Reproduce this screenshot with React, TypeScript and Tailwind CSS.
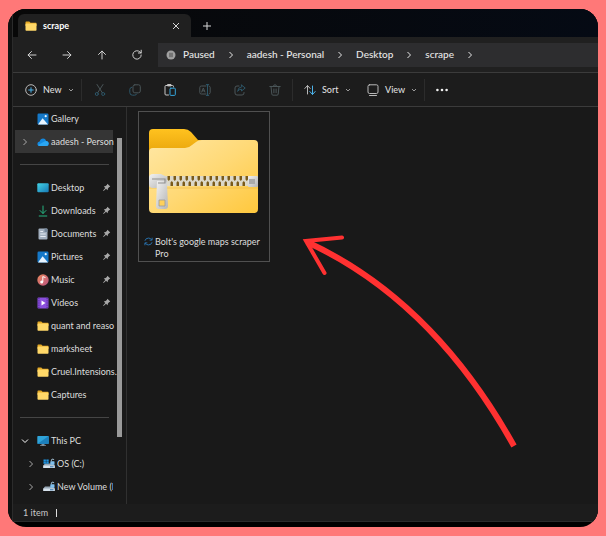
import type { ReactNode } from "react"

function Chevron({ className }: { className?: string }) {
  return (
    <svg
      viewBox="0 0 8 8"
      className={`w-2 h-2 shrink-0 ${className ?? ""}`}
      fill="none"
      stroke="currentColor"
    >
      <path d="M2.5 1L5.5 4L2.5 7" />
    </svg>
  )
}

function Stroke({
  children,
  className,
}: {
  children: ReactNode
  className?: string
}) {
  return (
    <svg
      viewBox="0 0 12 12"
      className={`w-3 h-3 shrink-0 ${className ?? ""}`}
      fill="none"
      stroke="currentColor"
      strokeLinecap="round"
      strokeLinejoin="round"
    >
      {children}
    </svg>
  )
}

function FolderIcon() {
  return (
    <svg viewBox="0 0 12 12" className="w-3 h-3 shrink-0">
      <path d="M.5 2.2Q.5 1.5 1.2 1.5H4.3L5.5 2.7H11Q11.5 2.7 11.5 3.3V6H.5Z" fill="#e5a924" />
      <rect x=".5" y="3.4" width="11" height="7.4" rx=".7" fill="#ffd868" />
    </svg>
  )
}

function PictureIcon() {
  return (
    <svg viewBox="0 0 12 12" className="w-3 h-3 shrink-0">
      <rect x=".5" y=".5" width="11" height="11" rx="1.2" fill="#1578c8" />
      <path d="M1 11.5L5.6 5.2L11 11.5Z" fill="#e9f5ff" />
      <circle cx="8.7" cy="3.2" r="1.1" fill="#e9f5ff" />
    </svg>
  )
}

function CloudIcon() {
  return (
    <svg viewBox="0 0 12 12" className="w-3 h-3 shrink-0">
      <path d="M3 10Q.4 10 .4 7.7Q.4 5.6 2.6 5.4Q3.5 2.5 6.1 2.5Q8.4 2.5 9.2 4.9Q11.7 5.1 11.7 7.5Q11.7 10 9.3 10Z" fill="#1389e0" />
      <path d="M3 10Q1.8 10 1 9L7.4 5.6Q8.3 4.8 9.2 4.9Q11.7 5.1 11.7 7.5Q11.7 10 9.3 10Z" fill="#2ba6f2" />
    </svg>
  )
}

function DesktopIcon() {
  return (
    <svg viewBox="0 0 12 12" className="w-3 h-3 shrink-0">
      <defs>
        <linearGradient id="desktop" x1="0" y1="0" x2="1" y2="1">
          <stop offset="0" stopColor="#43d3e6" />
          <stop offset="1" stopColor="#1779b5" />
        </linearGradient>
      </defs>
      <rect x=".3" y="1.3" width="11.4" height="9" rx="1" fill="url(#desktop)" />
    </svg>
  )
}

function DownloadIcon() {
  return (
    <Stroke className="text-[#27b582]">
      <path d="M6 1V8.3M3 5.5L6 8.5L9 5.5M2.2 11H9.8" />
    </Stroke>
  )
}

function DocumentIcon() {
  return (
    <svg viewBox="0 0 12 12" className="w-3 h-3 shrink-0">
      <rect x="1.5" y=".5" width="9" height="11" rx="1" fill="#a3b0bf" />
      <path d="M3.3 3.5H6M3.3 6H8.7M3.3 8.5H8.7" stroke="#e6ecf3" strokeWidth="1.1" />
      <path d="M7.5 .5H9.5Q10.5 .5 10.5 1.5V4H7.5Z" fill="#74869a" />
    </svg>
  )
}

function MusicIcon() {
  return (
    <svg viewBox="0 0 12 12" className="w-3 h-3 shrink-0">
      <defs>
        <linearGradient id="music" x1="0" y1="0" x2="1" y2="1">
          <stop offset="0" stopColor="#ee8a5f" />
          <stop offset="1" stopColor="#b8527f" />
        </linearGradient>
      </defs>
      <circle cx="6" cy="6" r="5.7" fill="url(#music)" />
      <path d="M5.8 8V2.6L8.5 3.6" stroke="#fff" fill="none" />
      <circle cx="4.7" cy="8" r="1.5" fill="#fff" />
    </svg>
  )
}

function VideoIcon() {
  return (
    <svg viewBox="0 0 12 12" className="w-3 h-3 shrink-0">
      <rect x=".5" y=".5" width="11" height="11" rx="1" fill="#8a4fdc" />
      <path d="M1.9 1V11M10.1 1V11" stroke="#4e2594" strokeDasharray="1.2 1" />
      <path d="M4.5 3.5L8.5 6L4.5 8.5Z" fill="#fff" />
    </svg>
  )
}

function ComputerIcon() {
  return (
    <svg viewBox="0 0 12 12" className="w-3 h-3 shrink-0">
      <rect x=".3" y="1" width="11.4" height="8" rx=".8" fill="#2fa4d9" />
      <path d="M.3 9L11.7 1V8.2Q11.7 9 10.9 9Z" fill="#1c80bd" />
      <path d="M4.5 9H7.5V10.3H9V11H3V10.3H4.5Z" fill="#7e8d99" />
    </svg>
  )
}

function DriveIcon({ windows }: { windows?: boolean }) {
  return (
    <svg viewBox="0 0 12 12" className="w-3 h-3 shrink-0">
      <path d="M2 5.5H10L11.7 7.5V10H.3V7.5Z" fill="#98a7b5" />
      <path d="M.3 7.5H11.7V10H.3Z" fill="#d7e2ec" />
      <path d="M7 8.8H10.5" stroke="#2a6fa8" />
      {windows && (
        <path d="M.5 1.5H2.9V3.4H.5ZM3.3 1.5H5.7V3.4H3.3ZM.5 3.8H2.9V5.7H.5ZM3.3 3.8H5.7V5.7H3.3Z" fill="#1f93e0" />
      )}
      <rect x="7.3" y="3.2" width="4.2" height="3.6" rx=".6" fill="#7fc0ee" />
      <path d="M8.4 3.2V2.4Q8.4 1.2 9.6 1.2Q10.8 1.2 11 2" stroke="#b9d9f0" fill="none" />
    </svg>
  )
}

function PinIcon() {
  return (
    <svg viewBox="0 0 10 10" className="w-[9px] h-[9px] mr-[2px] shrink-0 text-[#a8a8a8]">
      <path d="M6 .8L9.2 4L7.8 4.6L6.6 6L6.2 8L4.5 6.3L1.8 8.8L1.2 8.2L3.7 5.5L2 3.8L4 3.4L5.4 2.2Z" fill="currentColor" />
    </svg>
  )
}

const quickLinks = [
  { label: "Desktop", icon: <DesktopIcon />, pinned: true },
  { label: "Downloads", icon: <DownloadIcon />, pinned: true },
  { label: "Documents", icon: <DocumentIcon />, pinned: true },
  { label: "Pictures", icon: <PictureIcon />, pinned: true },
  { label: "Music", icon: <MusicIcon />, pinned: true },
  { label: "Videos", icon: <VideoIcon />, pinned: true },
  { label: "quant and reaso", icon: <FolderIcon />, pinned: false },
  { label: "marksheet", icon: <FolderIcon />, pinned: false },
  { label: "Cruel.Intensions.", icon: <FolderIcon />, pinned: false },
  { label: "Captures", icon: <FolderIcon />, pinned: false },
]

function TreeItem({
  label,
  icon,
  pinned,
  chevron,
  nested,
  selected,
}: {
  label: string
  icon: ReactNode
  pinned?: boolean
  chevron?: "open" | "closed"
  nested?: boolean
  selected?: boolean
}) {
  return (
    <li>
      <a
        href="#"
        className={`flex items-center h-[23px] ${
          nested ? "pl-3" : "pl-[6px]"
        } ${selected ? "bg-[#353535]" : ""}`}
      >
        <span className="w-4 shrink-0 text-[#a8a8a8]">
          {chevron === "closed" && <Chevron />}
          {chevron === "open" && <Chevron className="rotate-90 text-white" />}
        </span>
        {icon}
        <span
          className={`ml-[2px] flex-1 min-w-0 whitespace-nowrap ${
            nested ? "overflow-hidden" : ""
          }`}
        >
          {label}
        </span>
        {pinned && <PinIcon />}
      </a>
    </li>
  )
}

function Divider() {
  return (
    <li className="flex items-center h-[23px] pl-[5px] pr-1">
      <hr className="w-full border-[#454545]" />
    </li>
  )
}

function Sidebar() {
  return (
    <nav
      aria-label="Folders"
      className="relative w-[114px] shrink-0 border-r border-[#303030] overflow-hidden"
    >
      <ul className="absolute inset-x-0 top-0 pl-[2px] pr-[13px] text-[9px] text-[#dedede]">
        <TreeItem label="Gallery" icon={<PictureIcon />} />
        <TreeItem
          label="aadesh - Person"
          icon={<CloudIcon />}
          chevron="closed"
          selected
        />
        <Divider />
        {quickLinks.map(link => (
          <TreeItem key={link.label} {...link} />
        ))}
        <Divider />
        <TreeItem label="This PC" icon={<ComputerIcon />} chevron="open" />
        <TreeItem label="OS (C:)" icon={<DriveIcon windows />} chevron="closed" nested />
        <TreeItem label="New Volume (D" icon={<DriveIcon />} chevron="closed" nested />
      </ul>
      {/* Scrollbar thumb */}
      <div className="absolute right-1 top-[31px] h-[299px] w-[5px] bg-[#9a9a9a]" />
    </nav>
  )
}

function TabStrip() {
  return (
    <div className="flex items-end h-7 pl-[5px] bg-linear-to-r from-[#080808] to-[#050a14]">
      <div className="flex items-center h-[23px] w-[173px] pl-[7px] pr-[11px] rounded-t-md bg-[#202020]">
        <FolderIcon />
        <button type="button" className="ml-[6px] flex-1 text-left text-[9px] font-bold text-white">
          scrape
        </button>
        <button type="button" aria-label="Close tab">
          <svg viewBox="0 0 8 8" className="w-2 h-2" stroke="#d8d8d8">
            <path d="M1 1L7 7M7 1L1 7" />
          </svg>
        </button>
      </div>
      <button type="button" aria-label="New tab" className="flex items-center h-[23px] px-3">
        <svg viewBox="0 0 8 8" className="w-2 h-2" stroke="#d8d8d8">
          <path d="M4 0V8M0 4H8" />
        </svg>
      </button>
    </div>
  )
}

const navButtons = [
  { label: "Back", path: "M10 6H2.2M5.5 2.5L2 6L5.5 9.5" },
  { label: "Forward", path: "M2 6H9.8M6.5 2.5L10 6L6.5 9.5" },
  { label: "Up", path: "M6 10V2.2M2.5 5.5L6 2L9.5 5.5" },
  { label: "Refresh", path: "M10.2 6A4.2 4.2 0 1 1 9 3L10 3.8M10.2 1.2V4H7.4" },
]

function AddressRow() {
  return (
    <div className="flex items-center h-9 pl-px bg-[#202020] border-b border-[#3b3b3b]">
      {navButtons.map(button => (
        <button
          key={button.label}
          type="button"
          aria-label={button.label}
          className="flex justify-center w-[35px] text-[#cfcfcf]"
        >
          <Stroke>
            <path d={button.path} />
          </Stroke>
        </button>
      ))}
      <div className="flex flex-1 items-center h-6 ml-1 pl-2 bg-[#2d2d2f] text-[10px] font-medium text-[#e8e8e8] whitespace-nowrap">
        <svg viewBox="0 0 10 10" className="w-[10px] h-[10px] mr-[7px] shrink-0">
          <circle cx="5" cy="5" r="4.5" fill="#a0a0a0" />
          <path d="M4 2.8V7.2M6 2.8V7.2" stroke="#4a4a4a" strokeWidth="1" />
        </svg>
        {["Paused", "aadesh - Personal", "Desktop", "scrape"].map(crumb => (
          <span key={crumb} className="flex items-center">
            <button type="button">{crumb}</button>
            <Chevron className="mx-3" />
          </span>
        ))}
      </div>
    </div>
  )
}

function Separator() {
  return <div className="w-px h-[22px] shrink-0 bg-[#2c2c2c]" />
}

function DropChevron() {
  return (
    <svg viewBox="0 0 6 6" className="w-[6px] h-[6px]" fill="none" stroke="#999">
      <path d="M1 2L3 4L5 2" />
    </svg>
  )
}

const fileActions = [
  {
    label: "Cut",
    icon: (
      <>
        <path d="M3 .5L8.2 8.6M9 .5L3.8 8.6" />
        <circle cx="2.8" cy="10" r="1.5" stroke="#2d5668" />
        <circle cx="9.2" cy="10" r="1.5" stroke="#2d5668" />
      </>
    ),
  },
  {
    label: "Copy",
    icon: (
      <>
        <rect x="4" y=".8" width="7.3" height="8" rx="1.8" />
        <path d="M2.8 3.2Q.8 3.5 .8 5.5V8.5Q.8 11.2 3.5 11.2H5.5Q7.2 11.2 7.8 10" stroke="#2d5668" />
      </>
    ),
  },
  {
    label: "Paste",
    icon: (
      <>
        <path d="M4.5 11H2Q1 11 1 10V2.5Q1 1.5 2 1.5H8.5Q9.5 1.5 9.5 2.5V3M3.5 1.5V.5H7V1.5Z" stroke="#c6c6c6" />
        <rect x="6" y="4.2" width="5.3" height="7.2" rx=".8" stroke="#35a5dc" />
      </>
    ),
  },
  {
    label: "Rename",
    icon: (
      <>
        <path d="M7 2H2.3Q.8 2 .8 3.5V8.5Q.8 10 2.3 10H7M10 2Q11.2 2.3 11.2 3.5V8.5Q11.2 9.7 10 10M2.7 8L4.3 4L5.9 8M3.3 6.8H5.3" />
        <path d="M7.3 .6H9.7M8.5 .6V11.4M7.3 11.4H9.7" stroke="#2d5668" />
      </>
    ),
  },
  {
    label: "Share",
    icon: (
      <>
        <path d="M5 2H3Q1 2 1 4V9Q1 11 3 11H8Q10 11 10 9V8.5" />
        <path d="M7.5 1L11.2 4L7.5 7V5.2Q5 5.2 3.6 7.4Q4 3.2 7.5 2.8Z" stroke="#2d5668" />
      </>
    ),
  },
  {
    label: "Delete",
    icon: <path d="M.8 2.5H11.2M4.3 2.5Q4.3 .8 6 .8Q7.7 .8 7.7 2.5M2 2.5L2.8 10Q2.9 11.2 4 11.2H8Q9.1 11.2 9.2 10L10 2.5M4.9 5V8.7M7.1 5V8.7" />,
  },
]

function Toolbar() {
  return (
    <div className="flex items-center h-[34px] pl-3 bg-[#1c1c1c] border-b border-[#3b3b3b] text-[9px] font-medium text-[#dedede]">
      <button type="button" className="flex items-center gap-[6px] w-[56px]">
        <Stroke>
          <circle cx="6" cy="6" r="5.3" stroke="#b8b8b8" />
          <path d="M6 3.7V8.3M3.7 6H8.3" stroke="#4cb3ea" />
        </Stroke>
        New
        <DropChevron />
      </button>
      <Separator />
      {fileActions.map(action => (
        <button
          key={action.label}
          type="button"
          aria-label={action.label}
          className="flex justify-center w-[35px] text-[#4a5558]"
        >
          <Stroke>{action.icon}</Stroke>
        </button>
      ))}
      <Separator />
      <button type="button" className="flex items-center gap-[6px] ml-[11px] w-[63px]">
        <Stroke>
          <path d="M3.5 10V1.8M.8 4.5L3.5 1.5L6.2 4.5" stroke="#b8b8b8" />
          <path d="M8.5 2V10.2M5.8 7.5L8.5 10.5L11.2 7.5" stroke="#4cb3ea" />
        </Stroke>
        Sort
        <DropChevron />
      </button>
      <button type="button" className="flex items-center gap-[6px] w-[57px]">
        <Stroke className="text-[#b8b8b8]">
          <rect x="1" y=".8" width="10" height="8.7" rx="1.5" />
          <path d="M2.5 11.5H9.5" />
        </Stroke>
        View
        <DropChevron />
      </button>
      <Separator />
      <button type="button" aria-label="See more" className="ml-[11px]">
        <svg viewBox="0 0 12 12" className="w-3 h-3" fill="#f0f0f0">
          <circle cx="1.4" cy="6" r="1.3" />
          <circle cx="6" cy="6" r="1.3" />
          <circle cx="10.6" cy="6" r="1.3" />
        </svg>
      </button>
    </div>
  )
}

function ZipFolderIcon() {
  return (
    <svg viewBox="0 0 110 86" className="w-[110px] h-[86px]">
      <defs>
        <linearGradient id="folder-front" x1="0" y1="0" x2="1" y2="1">
          <stop offset="0" stopColor="#ffe7a4" />
          <stop offset=".5" stopColor="#ffd976" />
          <stop offset="1" stopColor="#ffc83d" />
        </linearGradient>
        <linearGradient id="folder-back" x1="0" y1="0" x2="0" y2="1">
          <stop offset="0" stopColor="#ffc21f" />
          <stop offset="1" stopColor="#e8a40c" />
        </linearGradient>
        <linearGradient id="metal" x1="0" y1="0" x2="1" y2="1">
          <stop offset="0" stopColor="#f2f2f2" />
          <stop offset="1" stopColor="#b4b4b4" />
        </linearGradient>
        <pattern id="teeth" width="6" height="10" patternUnits="userSpaceOnUse" x="18" y="48">
          <rect width="6" height="10" fill="#dcd8c8" />
          <path d="M.5 0H3V3.5L1.800 5L.5 3.500ZM3.500 10H6V6.500L4.800 5L3.500 6.500Z" fill="#7a5a18" />
        </pattern>
      </defs>
      <path d="M0 5Q0 1 4 1H35Q39 1 42 4L49 12H60V26H0Z" fill="url(#folder-back)" />
      <path d="M0 24Q0 20 4 20H36Q40 20 43 17L47 14Q49 12 53 12H105Q109 12 109 16V81Q109 85 105 85H4Q0 85 0 81Z" fill="url(#folder-front)" />
      <path d="M0 60H109" stroke="#e9b840" strokeWidth="1" opacity=".6" />
      <rect x="16" y="48" width="84" height="10" fill="url(#teeth)" />
      <rect x="99" y="48" width="10" height="11" rx="1" fill="url(#metal)" />
      <rect x="100" y="51" width="6" height="5" fill="#aaa" />
      <path d="M0 50Q0 46 4 46H12L18 49V58L12 60H4Q0 60 0 56Z" fill="url(#metal)" />
      <path d="M8 53H15Q18 53 18 56L19 78Q19 81 16 81H10Q7 81 7 78Z" fill="url(#metal)" />
      <path d="M10 72H16V78H10Z" fill="#ffd05a" stroke="#999" strokeWidth=".8" />
      <path d="M3 51H16V55H9" stroke="#909090" fill="none" strokeWidth="1.2" />
    </svg>
  )
}

function SyncIcon() {
  return (
    <svg viewBox="0 0 10 10" className="w-[9px] h-[9px] mt-px shrink-0" fill="none" stroke="#2a78b8">
      <path d="M1 4.2Q1.8 1.2 5 1.2Q7.5 1.2 8.6 3.2M9 .8V3.5H6.3M9 5.8Q8.2 8.8 5 8.8Q2.5 8.8 1.4 6.8M1 9.2V6.5H3.7" />
    </svg>
  )
}

function FilePane() {
  return (
    <main className="relative flex-1 pl-[11px] pt-1">
      <button
        type="button"
        className="flex flex-col w-[132px] h-[151px] pt-4 px-[10px] border border-[#505050] text-left"
      >
        <ZipFolderIcon />
        <span className="flex gap-[2px] mt-[22px] -mx-[5px] text-[9px] leading-3 text-[#dedede]">
          <SyncIcon />
          Bolt's google maps scraper Pro
        </span>
      </button>
      <svg
        viewBox="302 233 218 220"
        className="absolute left-[175px] top-[126px] w-[218px] h-[220px] pointer-events-none"
        fill="none"
        stroke="#ff3131"
      >
        <path d="M307 242C400 285 465 358 514 446" strokeWidth="6" />
        <path d="M342 237.500L306 241L324.500 273" strokeWidth="4" strokeLinecap="round" />
      </svg>
    </main>
  )
}

export default function App() {
  return (
    <div className="flex min-h-screen px-2 py-[9px] bg-[#ff7878] font-['Lato',sans-serif]">
      <div className="flex flex-1 pb-[5px] rounded-[18px] bg-black overflow-hidden">
        <div className="w-1 shrink-0 bg-[#111111]" />
        <div className="flex flex-col flex-1 min-w-0 border-l border-b border-[#2b2b2b] bg-[#191919]">
          <TabStrip />
          <AddressRow />
          <Toolbar />
          <div className="flex flex-1">
            <Sidebar />
            <FilePane />
          </div>
          <footer className="flex items-center gap-2 h-[17px] pl-[10px] bg-[#1c1c1c] text-[9px] text-[#c8c8c8]">
            1 item
            <span className="w-px h-2 bg-[#dedede]" />
          </footer>
        </div>
      </div>
    </div>
  )
}
